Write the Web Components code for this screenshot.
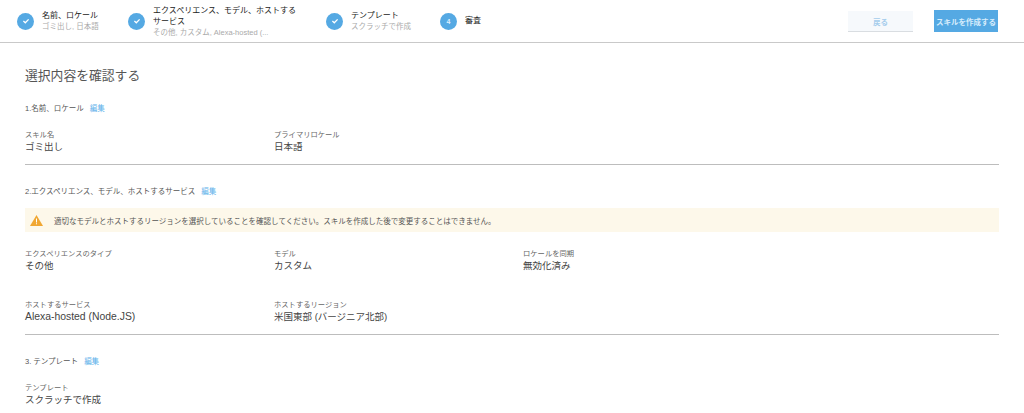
<!DOCTYPE html>
<html lang="ja">
<head>
<meta charset="utf-8">
<title>審査</title>
<style>
  html, body { margin: 0; background: #fff; }
  body {
    font-family: "Liberation Sans", "Noto Sans CJK JP", sans-serif;
    color: #555;
    overflow: hidden;
  }
</style>
</head>
<body>
<review-page>
  <wizard-header slot="header">
    <wizard-step slot="steps" style="width:111px" done name="名前、ロケール" sub="ゴミ出し, 日本語"></wizard-step>
    <wizard-step slot="steps" style="width:198px" done name="エクスペリエンス、モデル、ホストするサービス" sub="その他, カスタム, Alexa-hosted (..."></wizard-step>
    <wizard-step slot="steps" style="width:114px" done name="テンプレート" sub="スクラッチで作成"></wizard-step>
    <wizard-step slot="steps" num="4" name="審査"></wizard-step>
    <push-button slot="actions" kind="back">戻る</push-button>
    <push-button slot="actions" kind="primary">スキルを作成する</push-button>
  </wizard-header>

  <review-section heading="1.名前、ロケール" divider>
    <review-field label="スキル名">ゴミ出し</review-field>
    <review-field label="プライマリロケール">日本語</review-field>
  </review-section>

  <review-section heading="2.エクスペリエンス、モデル、ホストするサービス" divider>
    <warn-banner slot="notice">適切なモデルとホストするリージョンを選択していることを確認してください。スキルを作成した後で変更することはできません。</warn-banner>
    <review-field label="エクスペリエンスのタイプ">その他</review-field>
    <review-field label="モデル">カスタム</review-field>
    <review-field label="ロケールを同期">無効化済み</review-field>
    <review-field label="ホストするサービス"><span style="font-size:10.4px">Alexa-hosted (Node.JS)</span></review-field>
    <review-field label="ホストするリージョン">米国東部 (バージニア北部)</review-field>
  </review-section>

  <review-section heading="3. テンプレート">
    <review-field label="テンプレート">スクラッチで作成</review-field>
  </review-section>
</review-page>

<script>
class ReviewPage extends HTMLElement {
  constructor() {
    super();
    this.attachShadow({ mode: 'open' }).innerHTML = `
      <style>
        :host { display: block; }
        main { padding: 0 25px; }
        h1 { margin: 0; padding: 24px 0 19px; font-size: 12.8px; line-height: 18px; font-weight: 400; color: #555; }
      </style>
      <slot name="header"></slot>
      <main>
        <h1>選択内容を確認する</h1>
        <slot></slot>
      </main>`;
  }
}

class WizardHeader extends HTMLElement {
  constructor() {
    super();
    this.attachShadow({ mode: 'open' }).innerHTML = `
      <style>
        :host { display: flex; align-items: center; justify-content: space-between; box-sizing: border-box; height: 43px; padding: 0 26px 0 17px; border-bottom: 1px solid #c9c9c9; }
        .steps, .actions { display: flex; align-items: center; }
        .actions { gap: 21px; }
      </style>
      <div class="steps"><slot name="steps"></slot></div>
      <div class="actions"><slot name="actions"></slot></div>`;
  }
}

class WizardStep extends HTMLElement {
  constructor() {
    super();
    const sub = this.getAttribute('sub');
    const mark = this.hasAttribute('done')
      ? `<svg width="8" height="8" viewBox="0 0 8 8"><path d="M1.4 4.1 3.3 5.8 6.6 2.4" fill="none" stroke="#fff" stroke-width="1.3"/></svg>`
      : this.getAttribute('num');
    this.attachShadow({ mode: 'open' }).innerHTML = `
      <style>
        :host { display: flex; align-items: center; box-sizing: border-box; }
        .dot { flex: none; display: flex; align-items: center; justify-content: center; width: 17px; height: 17px; margin-right: 8px; border-radius: 50%; background: #55a9e3; color: #dcefff; font-size: 7px; font-weight: 700; }
        .name { max-width: 146px; font-size: 8px; line-height: 11.5px; color: #222; font-weight: 400; }
        .sub { font-size: 7.5px; line-height: 10px; color: #aaa; white-space: nowrap; }
      </style>
      <div class="dot">${mark}</div>
      <div>
        <div class="name">${this.getAttribute('name')}</div>
        ${sub ? `<div class="sub">${sub}</div>` : ''}
      </div>`;
  }
}

class PushButton extends HTMLElement {
  constructor() {
    super();
    this.attachShadow({ mode: 'open' }).innerHTML = `
      <style>
        :host { display: flex; align-items: center; justify-content: center; box-sizing: border-box; font-size: 7.5px; font-weight: 700; }
        :host([kind="back"]) { width: 65px; height: 21px; margin-top: 1px; background: #f6f9fc; color: #a5cdec; border-bottom: 1px solid #d9dde1; }
        :host([kind="primary"]) { width: 64px; height: 22px; background: #55a9e3; color: #d8edfc; }
      </style>
      <slot></slot>`;
  }
}

class ReviewSection extends HTMLElement {
  constructor() {
    super();
    this.attachShadow({ mode: 'open' }).innerHTML = `
      <style>
        :host { display: block; padding-bottom: 10px; margin-bottom: 22px; }
        :host([divider]) { border-bottom: 1px solid #bdbdbd; }
        :host(:last-child) { padding-bottom: 0; margin-bottom: 0; }
        .head { display: flex; gap: 6px; font-size: 7.5px; line-height: 10px; color: #555; margin-bottom: 11px; }
        .edit { color: #5cb0ea; }
        .fields { display: grid; grid-template-columns: repeat(3, 249px); row-gap: 25.5px; padding-top: 4px; }
        ::slotted([slot="notice"]) { margin-bottom: 12px; }
      </style>
      <div class="head"><span>${this.getAttribute('heading')}</span><span class="edit">編集</span></div>
      <slot name="notice"></slot>
      <div class="fields"><slot></slot></div>`;
  }
}

class ReviewField extends HTMLElement {
  constructor() {
    super();
    this.attachShadow({ mode: 'open' }).innerHTML = `
      <style>
        :host { display: block; }
        .label { font-size: 7.3px; line-height: 11px; color: #666; }
        .value { font-size: 9.5px; line-height: 14px; color: #444; }
      </style>
      <div class="label">${this.getAttribute('label')}</div>
      <div class="value"><slot></slot></div>`;
  }
}

class WarnBanner extends HTMLElement {
  constructor() {
    super();
    this.attachShadow({ mode: 'open' }).innerHTML = `
      <style>
        :host { display: flex; align-items: center; height: 24px; padding-left: 5px; background: #fdf8ea; font-size: 7.5px; color: #555; }
        svg { flex: none; margin-right: 11px; }
      </style>
      <svg width="13" height="11" viewBox="0 0 13 11"><path d="M6.5 0 13 11H0z" fill="#f0a733"/><path d="M6 3.5h1V7.4H6zM6 8.2h1v1.1H6z" fill="#fff"/></svg>
      <span><slot></slot></span>`;
  }
}

customElements.define('review-page', ReviewPage);
customElements.define('wizard-header', WizardHeader);
customElements.define('wizard-step', WizardStep);
customElements.define('push-button', PushButton);
customElements.define('review-section', ReviewSection);
customElements.define('review-field', ReviewField);
customElements.define('warn-banner', WarnBanner);
</script>
</body>
</html>
